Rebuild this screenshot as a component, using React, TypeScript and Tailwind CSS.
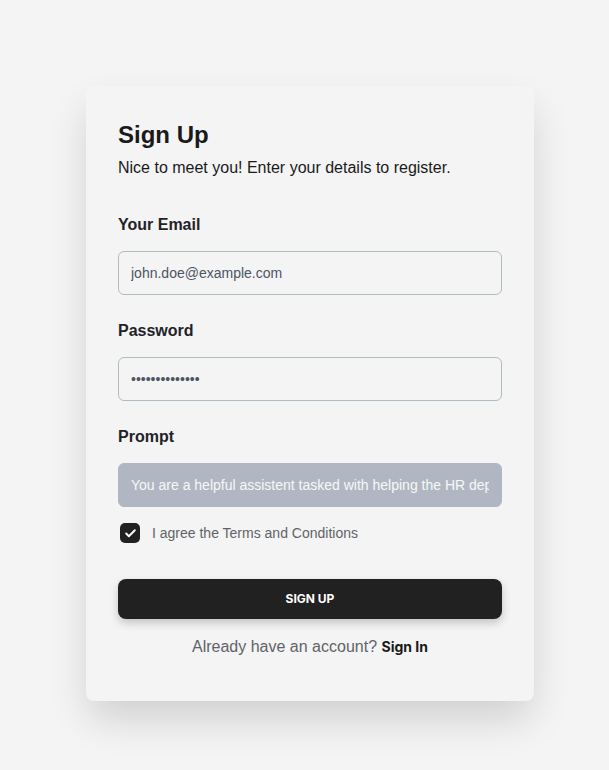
import { Check } from "lucide-react";

const label = "text-base font-bold leading-6 text-[#1f2328]";
const field =
  "h-[44px] w-full rounded-md border border-[#b0bcc4] bg-transparent px-3 text-sm text-[#4b5563] outline-none";

export default function App() {
  return (
    <div
      className="min-h-[770px] w-full bg-[#f4f4f4] pl-[86px] pt-[86px]"
      style={{ fontFamily: '"Liberation Sans", Arial, sans-serif' }}
    >
      <div className="flex w-[448px] flex-col rounded-lg bg-[#f4f4f4] px-8 pb-[42px] pt-[33px] shadow-[0_20px_40px_-4px_rgba(0,0,0,0.16)]">
        <h1 className="text-2xl font-bold leading-8 text-[#1a1a1a]">Sign Up</h1>
        <p className="mt-[5px] text-base leading-6 text-[#1a1a1a]">
          Nice to meet you! Enter your details to register.
        </p>

        <div className={`${label} mt-[33px]`}>Your Email</div>
        <input
          className={`${field} mt-[14px]`}
          defaultValue="john.doe@example.com"
        />

        <div className={`${label} mt-6`}>Password</div>
        <input
          type="password"
          className={`${field} mt-[14px]`}
          defaultValue="supersecret123"
        />

        <div className={`${label} mt-6`}>Prompt</div>
        <input
          disabled
          className="mt-[14px] h-[44px] w-full rounded-md border border-[#b0b7c3] bg-[#b0b7c3] px-3 text-sm text-[#f7f7f7] outline-none"
          defaultValue="You are a helpful assistent tasked with helping the HR department with screening candidates"
        />

        <label className="mt-4 flex items-center">
          <span className="ml-[2px] flex h-5 w-5 items-center justify-center rounded-[5px] bg-[#212121]">
            <Check size={13} strokeWidth={3.5} className="text-white" />
          </span>
          <span className="ml-3 text-sm text-[#5f6368]">
            I agree the Terms and Conditions
          </span>
        </label>

        <button
          type="button"
          className="mt-9 h-10 w-full rounded-lg bg-[#212121] text-xs font-bold text-white shadow-[0_4px_8px_rgba(0,0,0,0.2)]"
          style={{ fontFamily: "Inter, Roboto, sans-serif" }}
        >
          SIGN UP
        </button>

        <p className="mt-4 text-center text-base leading-6 text-[#5f6368]">
          Already have an account?{" "}
          <span
            className="text-sm font-bold text-[#1a1a1a]"
            style={{ fontFamily: "Inter, Roboto, sans-serif" }}
          >
            Sign In
          </span>
        </p>
      </div>
    </div>
  );
}
